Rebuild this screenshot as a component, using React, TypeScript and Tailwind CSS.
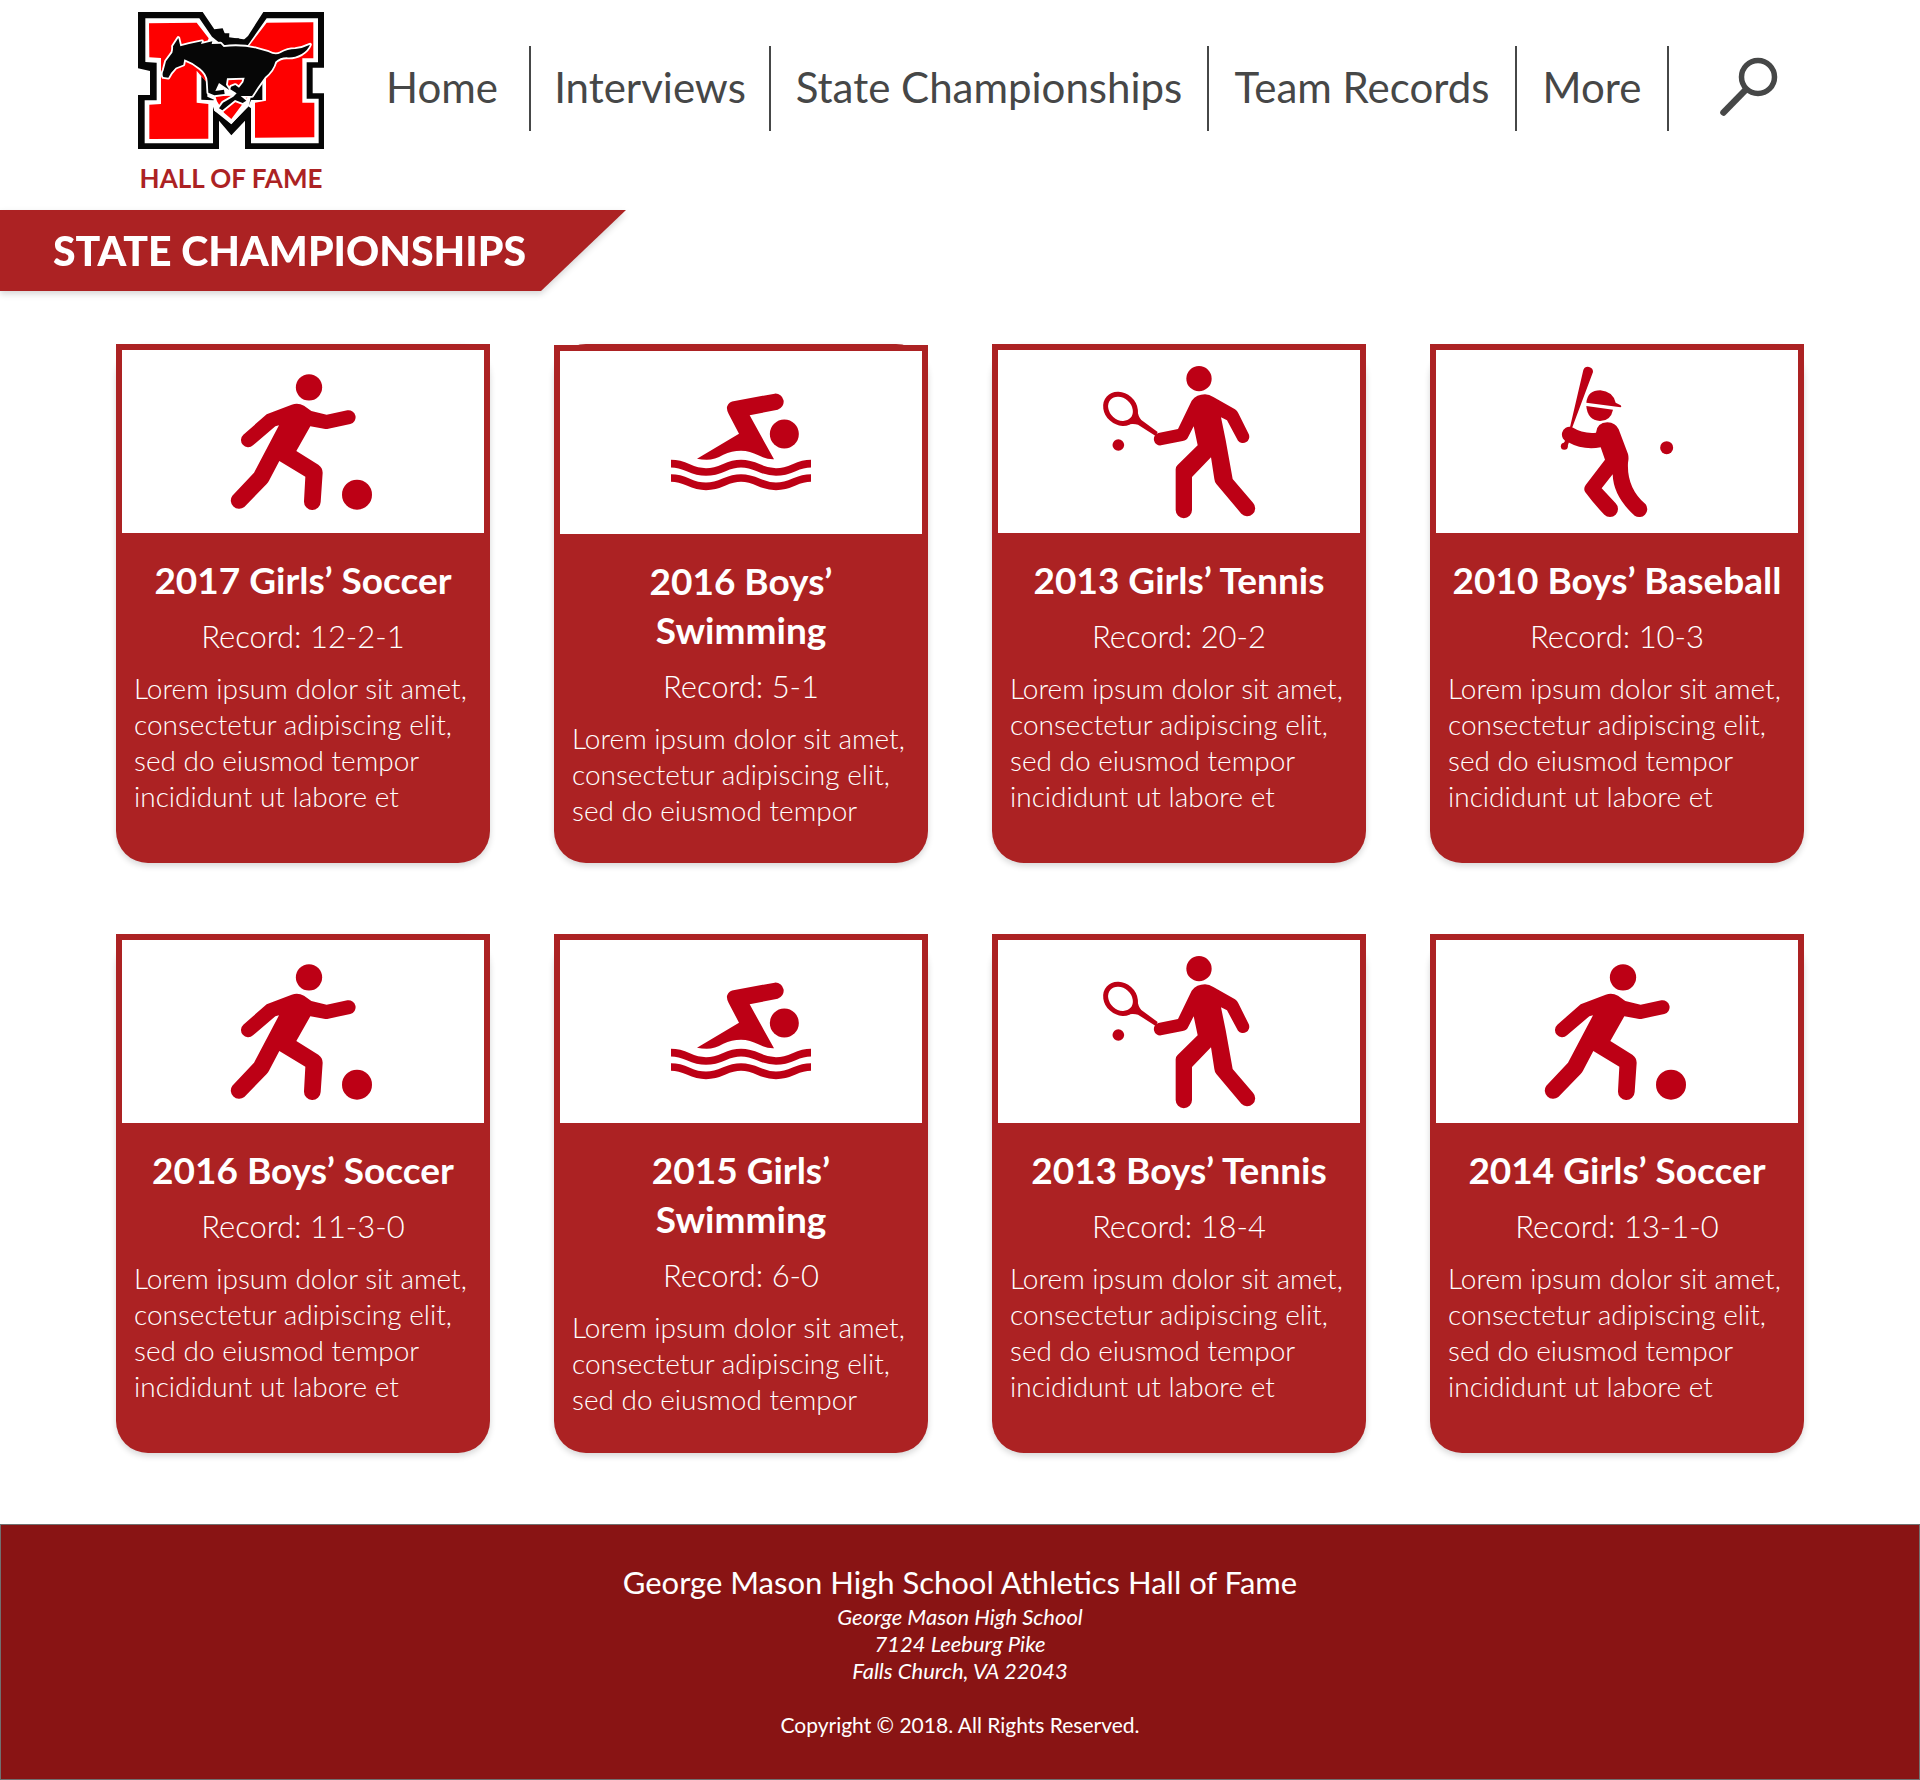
import type { ReactNode } from "react";

type Sport = "soccer" | "swimming" | "tennis" | "baseball";

const LONG_TEXT =
  "Lorem ipsum dolor sit amet, consectetur adipiscing elit, sed do eiusmod tempor incididunt ut labore et";
const SHORT_TEXT =
  "Lorem ipsum dolor sit amet, consectetur adipiscing elit, sed do eiusmod tempor";

const teams: { title: string; record: string; sport: Sport; text: string }[] = [
  { title: "2017 Girls’ Soccer", record: "12-2-1", sport: "soccer", text: LONG_TEXT },
  { title: "2016 Boys’ Swimming", record: "5-1", sport: "swimming", text: SHORT_TEXT },
  { title: "2013 Girls’ Tennis", record: "20-2", sport: "tennis", text: LONG_TEXT },
  { title: "2010 Boys’ Baseball", record: "10-3", sport: "baseball", text: LONG_TEXT },
  { title: "2016 Boys’ Soccer", record: "11-3-0", sport: "soccer", text: LONG_TEXT },
  { title: "2015 Girls’ Swimming", record: "6-0", sport: "swimming", text: SHORT_TEXT },
  { title: "2013 Boys’ Tennis", record: "18-4", sport: "tennis", text: LONG_TEXT },
  { title: "2014 Girls’ Soccer", record: "13-1-0", sport: "soccer", text: LONG_TEXT },
];

const links = [
  { label: "Home", width: "w-44" },
  { label: "Interviews", width: "w-60" },
  { label: "State Championships", width: "w-[438px]" },
  { label: "Team Records", width: "w-[308px]" },
  { label: "More", width: "w-[152px]" },
];

const drawings: Record<Sport, { viewBox: string; art: ReactNode }> = {
  soccer: {
    viewBox: "66 60 1086 549",
    art: (
      <>
        <circle cx="627" cy="172" r="39.5" />
        <circle cx="771" cy="494" r="45" />
        <path d="M500 253L575 224Q594 217 612 227L634 243L680 254L742 241A21 21 0 0 1 751 282L685 296Q679 298 672 296L631 289L589 363L655 404Q668 413 668 428L662 516A25 25 0 0 1 612 514L616 440L538 393L507 452Q504 458 500 462L433 531A25 25 0 0 1 397 497L462 428L537 286L526 289L459 346A21 21 0 0 1 430 314Z" />
      </>
    ),
  },
  swimming: {
    viewBox: "60 63 1086 549",
    art: (
      <>
        <circle cx="733" cy="312" r="43.5" />
        <path d="M471 386L597 311L566 252Q558 236 562 228Q567 214 584 213L704 191A24.5 24.5 0 0 1 713 239L629 256L702 388Q680 389 655 376Q630 362 603 362Q575 362 550 374Q525 389 500 389Q485 389 471 386Z" />
        <g fill="none" stroke="currentColor" strokeWidth="23">
          <path d="M393 401C443 401 447 426 498 426C549 426 555 401 603 401C653 401 658 426 708 426C759 426 765 401 813 401" />
          <path d="M393 444C443 444 447 469 498 469C549 469 555 444 603 444C653 444 658 469 708 469C759 469 765 444 813 444" />
        </g>
      </>
    ),
  },
  tennis: {
    viewBox: "54 60 1086 549",
    art: (
      <>
        <circle cx="657" cy="146" r="38" />
        <circle cx="415" cy="345" r="17.5" />
        <ellipse
          cx="421.5"
          cy="236.5"
          rx="48"
          ry="40"
          transform="rotate(42 421.5 236.5)"
          fill="none"
          stroke="currentColor"
          strokeWidth="15"
        />
        <path d="M445 281L472 238Q474 260 484 270L533 306L527 318L474 284Q462 280 445 283Z" />
        <path d="M635 212Q650 193 675 193Q688 193 700 201L765 238Q772 243 775 250L806 312A19 19 0 0 1 774 332L741 271L723 262L737 330L758 447L819 518A24 24 0 0 1 784 551L709 462Q704 456 703 447L693 382L636 441L636 540A24 24 0 0 1 587 540L587 418Q587 411 592 406L653 346L641 289L625 320Q620 331 608 333L543 346A19 19 0 0 1 535 309L594 297Z" />
      </>
    ),
  },
  baseball: {
    viewBox: "48 60 1086 549",
    art: (
      <>
        <circle cx="740" cy="353" r="19.5" />
        <path d="M490 120A15 15 0 0 1 519 126L457 292L450 292Z" />
        <circle cx="433" cy="349" r="10.5" />
        <path d="M429 343L440 325L449 330L443 348Z" />
        <path d="M499 218Q503 181 541 181Q578 184 587 218L602 226Q606 230 602 232Z" />
        <path d="M499 228L579 239Q572 273 540 273Q502 270 499 228Z" />
        <path d="M455 291Q490 312 528 308Q531 278 562 277Q587 278 596 298L624 372Q627 384 624 398Q620 475 677 523A24 24 0 0 1 644 557Q580 500 578 433L545 475L587 520A24 24 0 0 1 553 554Q520 520 496 487Q489 476 497 465L555 389L542 352Q490 362 443 336A23 23 0 0 1 455 291Z" />
      </>
    ),
  },
};

function SportIcon({ sport }: { sport: Sport }) {
  const { viewBox, art } = drawings[sport];
  return (
    <svg viewBox={viewBox} className="h-[183px] w-full text-[#bd0015]" fill="currentColor" aria-hidden="true">
      {art}
    </svg>
  );
}

function MustangLogo() {
  return (
    <svg viewBox="54 36 558 411" className="h-[137px] w-[186px]" role="img" aria-label="Mustangs logo">
      <path
        fill="#060606"
        d="M54 36H248L283 88L308 85L314 100L328 100L327 118L355 115L368 122L384 108L430 36H612V203H578V280H612V447H375V362L334 406L297 362V447H54V285H90V213L54 205Z"
      />
      <path
        fill="#fff"
        d="M76 55H238L276 110L300 130L380 140L440 55H594V187H560V296H596V430H393V325L384 318L334 373L283 332L279 320V430H74V301H110V188L76 186Z"
      />
      <path
        fill="#060606"
        d="M244 228L262 248L262 290L284 300L279 301L244 299ZM427 245V300H393L385 320L334 365L390 290ZM276 100L310 138L380 136L392 122L370 118L327 112L300 90Z"
      />
      <path
        fill="#fe0000"
        d="M87 70L230 68L266 115L262 125L320 150L262 250L230 212V308L265 312V416L88 417V314L123 312V174L88 172ZM440 68L580 67V175H547V308H583V412L405 413V308L438 302V225L470 190L385 140Z"
      />
      <path fill="#fff" d="M281 280L395 275L387 318L334 372L300 342L283 332Z" />
      <path fill="#fe0000" d="M286 288L386 287L334 357L312 338L291 304ZM316 232L372 230L366 262L320 262Z" />
      <path
        fill="#060606"
        stroke="#fff"
        strokeWidth="11"
        strokeLinejoin="round"
        paintOrder="stroke"
        fillRule="evenodd"
        d="M130 231Q125 222 131 211L138 184L157 158Q160 148 159 139L175 114L181 139L207 132L246 124L243 132L277 124L275 132L302 131L311 141Q360 134 410 146L445 156Q466 168 482 159Q502 147 526 147Q550 144 570 134Q564 150 545 162Q520 175 500 172Q480 172 466 185Q460 210 435 231L413 262L396 288L362 288L379 302L368 309L345 300L307 331L297 325L309 308L340 290L350 280L331 268L333 260L346 255L357 263L370 247L374 233L321 235L318 254L328 270L297 249L286 273L312 269L314 282L283 286L265 278L263 245Q262 222 240 205Q218 187 193 178L190 194L167 203L153 219L145 233Z"
      />
    </svg>
  );
}

function TeamCard({ team, nudged }: { team: (typeof teams)[number]; nudged: boolean }) {
  return (
    <article className="flex min-h-[519px] flex-col rounded-4xl bg-[#ac2223] pb-6 text-white shadow-[0_3px_6px_rgba(0,0,0,0.16)]">
      <div className={`border-6 border-[#ac2223] bg-white ${nudged ? "mt-px" : ""}`}>
        <SportIcon sport={team.sport} />
      </div>
      <div className="px-4.5 pt-4">
        <h2 className="text-center text-[37px] leading-[49px] font-bold">{team.title}</h2>
        <p className="mt-3 text-center text-[31px] leading-10 font-light">Record: {team.record}</p>
        <p className="mt-3.5 text-[28px] leading-9 font-light">{team.text}</p>
      </div>
    </article>
  );
}

export default function App() {
  return (
    <div className="flex min-h-screen flex-col bg-white font-['Lato',sans-serif]">
      <header className="flex items-start pr-[91px] pl-[138px]">
        <a href="#home" className="flex w-[186px] flex-col items-center pt-3 text-[#ac2223]">
          <MustangLogo />
          <span className="mt-[13px] text-[26px] leading-8 font-bold whitespace-nowrap">HALL OF FAME</span>
        </a>
        <nav aria-label="Main" className="ml-auto flex items-center pt-[46px] text-[#464747]">
          <ul className="flex">
            {links.map((link) => (
              <li key={link.label} className={`h-[85px] border-r-2 border-[#464747] ${link.width}`}>
                <a
                  href={`#${link.label.toLowerCase().replace(" ", "-")}`}
                  className="flex h-full items-center justify-center pb-1 text-[42px] leading-[48px] whitespace-nowrap"
                >
                  {link.label}
                </a>
              </li>
            ))}
          </ul>
          <button type="button" aria-label="Search" className="flex h-[85px] w-40 items-center justify-center pb-1">
            <svg viewBox="0 0 58 60" className="h-[60px] w-[58px]" fill="none" stroke="currentColor" aria-hidden="true">
              <circle cx="38" cy="20" r="16.5" strokeWidth="5.5" />
              <path d="M25.5 33L3.5 55.5" strokeWidth="6.5" strokeLinecap="round" />
            </svg>
          </button>
        </nav>
      </header>

      <div className="mt-4 flex drop-shadow-[0_3px_3px_rgba(0,0,0,0.16)]">
        <h1 className="w-[626px] bg-[#ac2223] py-4 pl-[53px] text-[41px] leading-[49px] font-black whitespace-nowrap text-white [clip-path:polygon(0_0,100%_0,541px_100%,0_100%)]">
          STATE CHAMPIONSHIPS
        </h1>
      </div>

      <main className="grid grid-cols-4 gap-x-16 gap-y-[71px] px-[116px] pt-[53px] pb-[71px]">
        {teams.map((team, index) => (
          <TeamCard key={team.title} team={team} nudged={index === 1} />
        ))}
      </main>

      <footer className="flex-1 border border-[#707070] bg-[#891414] pt-9 pb-8 text-center text-white">
        <p className="text-[31px] leading-[42px]">George Mason High School Athletics Hall of Fame</p>
        <address className="text-[22px] leading-[27px]">
          George Mason High School
          <br />
          7124 Leeburg Pike
          <br />
          Falls Church, VA 22043
        </address>
        <p className="mt-[27px] text-[21px] leading-[27px]">Copyright © 2018. All Rights Reserved.</p>
      </footer>
    </div>
  );
}
